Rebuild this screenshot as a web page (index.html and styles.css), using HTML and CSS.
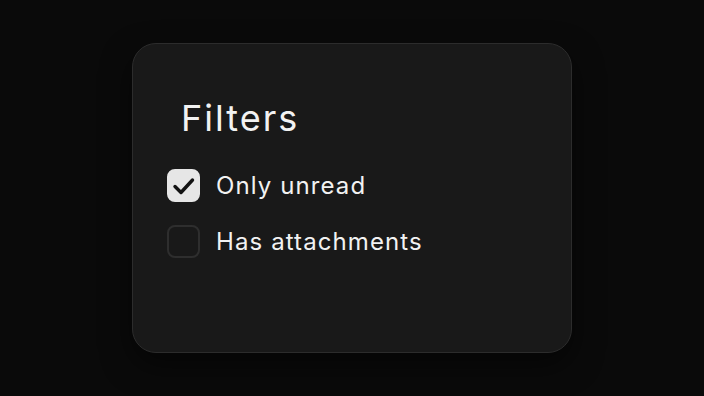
FILE: index.html
```html
<!DOCTYPE html>
<html>
<head>
<meta charset="utf-8">
<link rel="stylesheet" href="styles.css">
</head>
<body>
<div class="card">
  <h1 class="title">Filters</h1>
  <div class="list">
    <label class="row">
      <span class="box checked">
        <svg viewBox="0 0 33 33" width="33" height="33"><path d="M8 17.5l6 6L25.5 11" fill="none" stroke="#121212" stroke-width="3.4" stroke-linecap="round" stroke-linejoin="round"/></svg>
      </span>
      <span class="text">Only unread</span>
    </label>
    <label class="row">
      <span class="box"></span>
      <span class="text">Has attachments</span>
    </label>
  </div>
</div>
</body>
</html>
```
FILE: styles.css
```css
html, body {
  margin: 0;
  height: 100%;
}
body {
  background: #0a0a0a;
  display: flex;
  align-items: center;
  justify-content: center;
  font-family: Inter, "Noto Sans", sans-serif;
  color: #f2f2f2;
}
.card {
  box-sizing: border-box;
  width: 440px;
  height: 310px;
  background: #191919;
  border: 1px solid #2c2c2c;
  border-radius: 24px;
  padding: 53px 34px 0;
  box-shadow: 0 12px 30px rgba(0,0,0,0.5);
}
.title {
  margin: 0 0 29px 14px;
  font-size: 36px;
  line-height: 42px;
  font-weight: 400;
  letter-spacing: 2px;
}
.list {
  display: flex;
  flex-direction: column;
  gap: 22px;
}
.row {
  display: flex;
  align-items: center;
  gap: 16px;
  height: 34px;
}
.box {
  box-sizing: border-box;
  width: 33px;
  height: 33px;
  border-radius: 8px;
  border: 2px solid #2e2e2e;
  display: flex;
  align-items: center;
  justify-content: center;
  flex: none;
}
.box svg {
  display: block;
  margin: -2px;
}
.box.checked {
  background: #e6e6e6;
  border-color: #e6e6e6;
}
.text {
  font-size: 24px;
  line-height: 34px;
  padding-top: 2px;
  letter-spacing: 1.1px;
}
```
